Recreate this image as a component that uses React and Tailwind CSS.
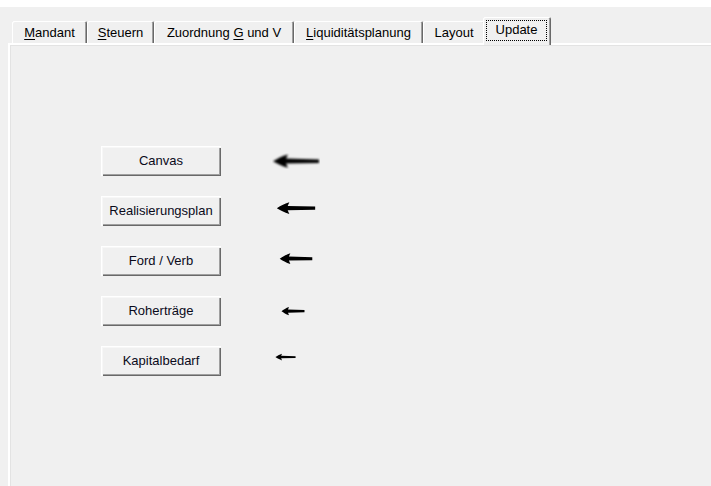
import React from 'react';

const TABS = [
  { label: 'Mandant', key: 'M', rest: 'andant', w: 'w-[75px]' },
  { label: 'Steuern', key: 'S', rest: 'teuern', w: 'w-[67px]' },
  { label: 'Zuordnung G und V', pre: 'Zuordnung ', key: 'G', rest: ' und V', w: 'w-[140px]' },
  { label: 'Liquiditätsplanung', key: 'L', rest: 'iquiditätsplanung', w: 'w-[129px]' },
  { label: 'Layout', rest: 'Layout', w: 'w-[62px]' },
];

// Button rows: arrow size, spacing to the arrow, lift
const ROWS = [
  { label: 'Canvas', aw: 48, ah: 16, ml: 'ml-[51px]', mb: 'mb-0' },
  { label: 'Realisierungsplan', aw: 40, ah: 14, ml: 'ml-[55px]', mb: 'mb-[6px]' },
  { label: 'Ford / Verb', aw: 34, ah: 13, ml: 'ml-[58px]', mb: 'mb-[6px]' },
  { label: 'Roherträge', aw: 24, ah: 10, ml: 'ml-[60px]', mb: 'mb-0' },
  { label: 'Kapitalbedarf', aw: 21, ah: 8, ml: 'ml-[54px]', mb: 'mb-[8px]' },
];

const Arrow = ({ w, h, id }) => (
  <svg width={w} height={h} viewBox="0 0 48 16" preserveAspectRatio="none">
    <defs>
      <filter id={id} x="-10%" y="-30%" width="130%" height="160%">
        <feGaussianBlur stdDeviation="0.8" />
      </filter>
    </defs>
    <path
      d="M1 8.2 C5 6 10 3 16 1.5 L14 5.6 L47 6.4 L47 10 L14 10.6 L16 14.8 C10 13 5 10.5 1 8.2 Z"
      fill="#000"
      filter={`url(#${id})`}
    />
  </svg>
);

const Tab = ({ tab }) => (
  <div
    className={`${tab.w} h-[22px] flex items-center justify-center rounded-t-[2px] bg-[#f0f0f0] shadow-[inset_1px_1px_#ffffff,inset_-1px_0_#696969,inset_-2px_0_#a0a0a0]`}
  >
    <span className="pt-[1px]">
      {tab.pre}
      {tab.key && <span className="underline underline-offset-2">{tab.key}</span>}
      {tab.rest}
    </span>
  </div>
);

const App = () => {
  return (
    <div className="w-[711px] h-[486px] overflow-hidden bg-[#f0f0f0] text-[13px] text-black font-['Liberation_Sans',Arial,sans-serif]">
      <div className="h-[7px] bg-white" />
      <div className="pl-[8px]">
        <div className="flex items-end h-[36px] pl-[4px]">
          {TABS.map((t) => (
            <Tab key={t.label} tab={t} />
          ))}
          <div className="relative z-10 -ml-[2px] -mb-[2px] w-[68px] h-[28px] p-[3px] pb-[4px] rounded-t-[2px] bg-[#f0f0f0] shadow-[inset_1px_1px_#ffffff,inset_-1px_0_#696969,inset_-2px_0_#a0a0a0]">
            <div className="h-full w-[61px] border border-dotted border-black flex items-center justify-center">
              <span className="pb-[1px]">Update</span>
            </div>
          </div>
        </div>
        <div className="h-[443px] border-t-2 border-l-2 border-white shadow-[inset_1px_1px_#e3e3e3] pt-[101px] pl-[91px]">
          <div className="flex flex-col gap-[20px]">
            {ROWS.map((r, i) => (
              <div key={r.label} className="flex items-center">
                <button className="w-[120px] h-[30px] bg-[#f0f0f0] text-[13px] text-[#0a0a1a] shadow-[inset_1px_1px_#ffffff,inset_2px_2px_#f7f7f7,inset_-1px_-1px_#696969,inset_-2px_-2px_#a0a0a0]">
                  {r.label}
                </button>
                <div className={`${r.ml} ${r.mb} flex`}>
                  <Arrow w={r.aw} h={r.ah} id={`blur${i}`} />
                </div>
              </div>
            ))}
          </div>
        </div>
      </div>
    </div>
  );
};

export default App;
